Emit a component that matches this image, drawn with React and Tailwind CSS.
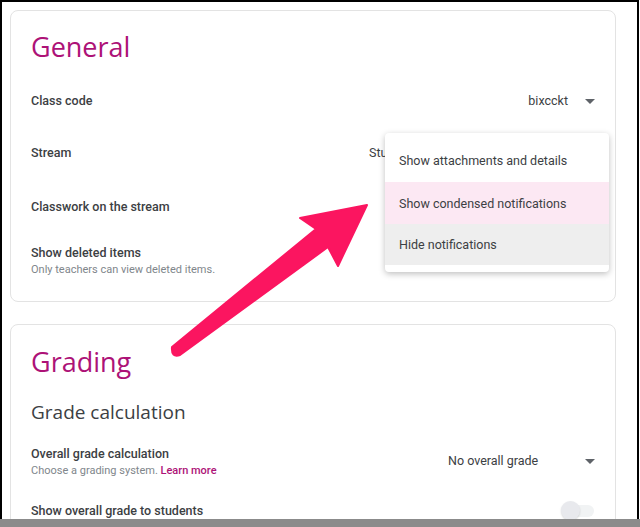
import React from 'react';

const body = { fontFamily: 'Roboto, "Liberation Sans", sans-serif' };
const heading = { fontFamily: '"Open Sans", Roboto, sans-serif' };

function Caret() {
  return (
    <svg width="10" height="5" viewBox="0 0 10 5" className="shrink-0">
      <path d="M0 0 L10 0 L5 5 Z" fill="#5f6368" />
    </svg>
  );
}

function Row({ label, sub, right, className }) {
  return (
    <div className={`flex items-center justify-between ${className}`}>
      <div className="flex flex-col">
        <span className="text-[12.5px] leading-[18px] font-medium text-[#3c4043]">{label}</span>
        {sub && <span className="text-[11px] leading-[15px] text-[#80868b]">{sub}</span>}
      </div>
      {right}
    </div>
  );
}

export default function App() {
  return (
    <div className="relative w-[640px] h-[527px] overflow-hidden bg-white flex flex-col" style={body}>
      {/* Frame */}
      <div className="w-[639px] flex-1 min-h-0 border-2 border-b-0 border-black overflow-hidden">
        <div className="pl-[8px] pt-[8px] pr-[21px] flex flex-col gap-[22px]">
          {/* General */}
          <section className="h-[292px] border border-[#e3e3e3] rounded-[8px] pl-[20px] pr-[20px] pt-[18px]">
            <h2 className="text-[27px] leading-[36px] text-[#ad1277]" style={heading}>General</h2>
            <Row
              label="Class code"
              className="h-[52px] mt-[10px]"
              right={
                <div className="flex items-center gap-[17px] text-[12.5px] text-[#3c4043]">
                  <span>bixcckt</span>
                  <Caret />
                </div>
              }
            />
            <Row
              label="Stream"
              className="h-[52px]"
              right={
                <div className="w-[226px] flex items-center justify-between text-[12.5px] text-[#3c4043]">
                  <span className="w-[16px] overflow-hidden whitespace-nowrap">Students can post and comment</span>
                  <Caret />
                </div>
              }
            />
            <Row label="Classwork on the stream" className="h-[55px]" />
            <Row
              label="Show deleted items"
              sub="Only teachers can view deleted items."
              className="pt-[10px]"
            />
          </section>

          {/* Grading */}
          <section className="h-[260px] border border-[#e3e3e3] rounded-[8px] pl-[20px] pr-[20px] pt-[19px]">
            <h2 className="text-[27px] leading-[36px] text-[#ad1277]" style={heading}>Grading</h2>
            <h3 className="mt-[18px] text-[19px] leading-[28px] text-[#3c4043]" style={heading}>Grade calculation</h3>
            <div className="mt-[19px] flex items-center justify-between">
              <div className="flex flex-col">
                <span className="text-[12.5px] leading-[18px] font-medium text-[#3c4043]">Overall grade calculation</span>
                <span className="text-[11px] leading-[15px] text-[#80868b]">
                  Choose a grading system. <span className="font-medium text-[#ad1277]">Learn more</span>
                </span>
              </div>
              <div className="w-[147px] flex items-center justify-between text-[12.5px] text-[#3c4043]">
                <span>No overall grade</span>
                <Caret />
              </div>
            </div>
            <div className="mt-[23px] flex items-center justify-between">
              <span className="text-[12.5px] leading-[18px] font-medium text-[#3c4043]">Show overall grade to students</span>
              <div className="relative w-[34px] h-[19px] flex items-center">
                <div className="ml-[9px] w-[24px] h-[12px] rounded-full bg-[#f1f3f4]" />
                <div className="absolute left-0 top-0 w-[19px] h-[19px] rounded-full bg-[#e8e9ed] shadow-[0_1px_2px_rgba(0,0,0,0.15)]" />
              </div>
            </div>
          </section>
        </div>
      </div>
      <div className="h-[8px] w-full bg-[#8b8b8b]" />

      {/* Dropdown menu */}
      <div className="absolute left-[385px] top-[133px] w-[224px] bg-white rounded-[4px] shadow-[0_2px_6px_rgba(0,0,0,0.25)] pb-[7px] text-[12.5px] text-[#3c4043]">
        <div className="h-[49px] flex items-center pl-[14px] pt-[8px]">Show attachments and details</div>
        <div className="h-[42px] flex items-center pl-[14px] pt-[2px] bg-[#fce8f3]">Show condensed notifications</div>
        <div className="h-[41px] flex items-center pl-[14px] pt-[2px] bg-[#eeeeee]">Hide notifications</div>
      </div>

      {/* Annotation arrow */}
      <svg className="absolute left-0 top-0 pointer-events-none" width="640" height="527" viewBox="0 0 640 527">
        <path
          d="M172 347 L316 229 L300 218 L367 205 L338 266 L328 247 L180 355 Q171 358 172 347 Z"
          fill="#fb1560"
          stroke="#fb1560"
          strokeWidth="2"
          strokeLinejoin="round"
        />
      </svg>
    </div>
  );
}
